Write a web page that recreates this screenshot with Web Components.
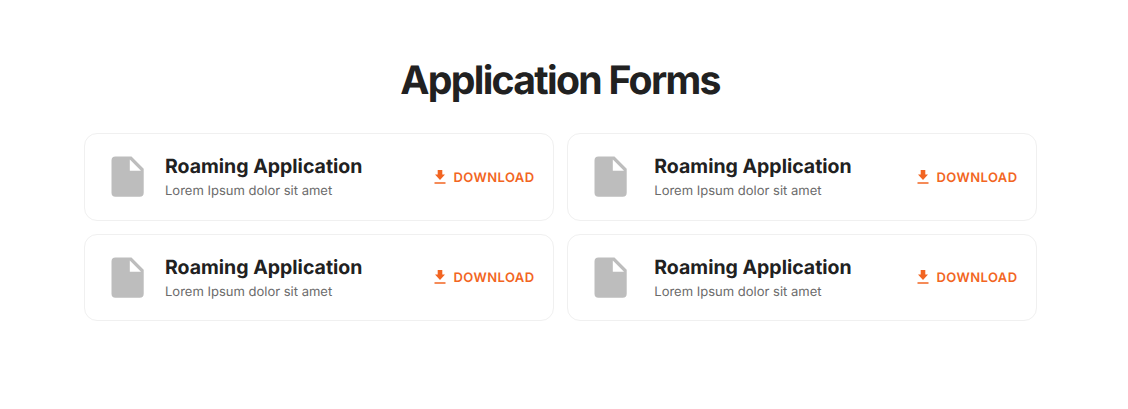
<!DOCTYPE html>
<html lang="en"><head><meta charset="utf-8"><title>Application Forms</title>
<style>body{margin:0;background:#fff;font-family:Inter,sans-serif;text-rendering:geometricPrecision}</style></head><body>
<forms-section><span slot="title">Application Forms</span>
<form-card></form-card><form-card class="r"></form-card><form-card></form-card><form-card class="r"></form-card>
</forms-section>
<script>
class FormsSection extends HTMLElement{constructor(){super();this.attachShadow({mode:'open'}).innerHTML=`
<style>:host{display:block;box-sizing:border-box;height:409px;padding:56px 91px 0 84px;background:#fff}
h1{margin:0 1px 28px 0;height:49px;line-height:49px;font-size:39.2px;font-weight:700;letter-spacing:-1.72px;text-align:center;color:#212121}
.grid{display:grid;grid-template-columns:470px 470px;column-gap:13px;row-gap:13px}</style>
<h1><slot name="title"></slot></h1><div class="grid"><slot></slot></div>`}}
customElements.define('forms-section',FormsSection);
class FormCard extends HTMLElement{constructor(){super();this.attachShadow({mode:'open'}).innerHTML=`
<style>:host{display:flex;box-sizing:border-box;height:87.5px;border:1px solid #f0f0f0;border-radius:13px;align-items:center;padding:0 18.500px 0 26px;--gap:21px}
:host(.r){--gap:27.3px}
.file{flex:none;width:33px;height:41px;margin-right:var(--gap)}
.text{flex:1;white-space:nowrap;padding-top:1px}
.name{font-size:19.5px;line-height:26px;font-weight:700;color:#212121}
.desc{font-size:13px;line-height:22px;color:#6b6b6b;padding-top:1px;margin-bottom:-1px}
.dl{display:flex;align-items:center;color:#f26522;font-size:13px;font-weight:600;letter-spacing:.42px;gap:7.5px}
.dl svg{width:12px;height:14px}
.dl span{line-height:16px;padding-top:1.5px}</style>
<svg class="file" viewBox="0 0 33 41"><path fill="#bdbdbd" d="M4.500 .5H20.500L32.700 12.700V36.700Q32.700 40.700 28.700 40.700H4.500Q.5 40.700 .5 36.700V4.500Q.5 .5 4.500 .5ZM18.800 3.500V14.700H30Z" fill-rule="evenodd"/></svg>
<div class="text"><div class="name">Roaming Application</div><div class="desc">Lorem Ipsum dolor sit amet</div></div>
<div class="dl"><svg viewBox="0 0 12 14"><path fill="currentColor" d="M3.700 0H8.300V4.500H11L6 10L1 4.500H3.700ZM.5 12.200H11.500V13.800H.5Z"/></svg><span>DOWNLOAD</span></div>`}}
customElements.define('form-card',FormCard);
</script></body></html>
